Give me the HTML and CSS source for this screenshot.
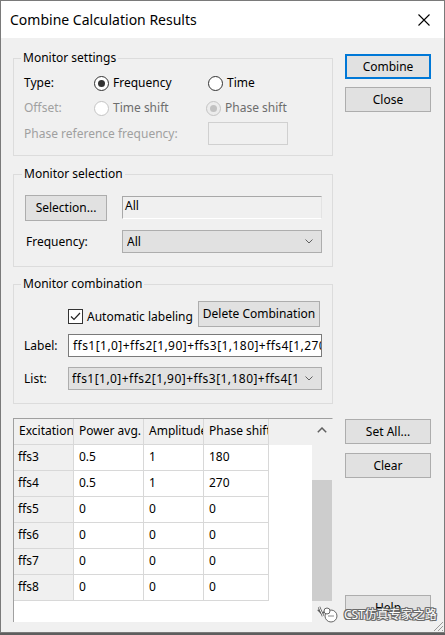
FILE: index.html
```html
<!DOCTYPE html>
<html>
<head>
<meta charset="utf-8">
<link rel="stylesheet" href="styles.css">
</head>
<body>
<div class="window">
  <div class="titlebar">
    <span class="title">Combine Calculation Results</span>
    <svg class="close" width="12" height="12" viewBox="0 0 12 12"><path d="M0.5 0.5L11.5 11.5M11.5 0.5L0.5 11.5" stroke="#000" stroke-width="1.1" fill="none"/></svg>
  </div>
  <div class="client">
    <div class="groups">
      <fieldset class="group g1">
        <legend>Monitor settings</legend>
        <div class="row r1">
          <span class="lbl">Type:</span>
          <label class="radio"><span class="rb on"></span>Frequency</label>
          <label class="radio c3"><span class="rb"></span>Time</label>
        </div>
        <div class="row r2">
          <span class="lbl dis">Offset:</span>
          <label class="radio dis2"><span class="rb off"></span>Time shift</label>
          <label class="radio dis2 c3b"><span class="rb off on"></span>Phase shift</label>
        </div>
        <div class="row r3">
          <span class="lbl dis span2">Phase reference frequency:</span>
          <span class="edit-dis"></span>
        </div>
      </fieldset>

      <fieldset class="group g2">
        <legend>Monitor selection</legend>
        <div class="row s1">
          <button class="btn sel">Selection...</button>
          <div class="static-edit">All</div>
        </div>
        <div class="row s2">
          <span class="lbl flbl">Frequency:</span>
          <div class="combo"><span class="ctext">All</span><svg class="chev" width="8" height="5" viewBox="0 0 8 5"><path d="M0.5 0.5L4 4L7.5 0.5" stroke="#606060" fill="none"/></svg></div>
        </div>
      </fieldset>

      <fieldset class="group g3">
        <legend>Monitor combination</legend>
        <div class="row m1">
          <label class="check"><span class="cb"><svg width="13" height="13" viewBox="0 0 13 13"><path d="M2 6.5L5 9.5L11 3" stroke="#222" stroke-width="1.2" fill="none"/></svg></span>Automatic labeling</label>
          <button class="btn del">Delete Combination</button>
        </div>
        <div class="row m2">
          <span class="lbl llbl">Label:</span>
          <div class="edit"><span class="etext">ffs1[1,0]+ffs2[1,90]+ffs3[1,180]+ffs4[1,270]</span></div>
        </div>
        <div class="row m3">
          <span class="lbl llbl">List:</span>
          <div class="combo wide"><span class="ctext">ffs1[1,0]+ffs2[1,90]+ffs3[1,180]+ffs4[1,270]</span><svg class="chev" width="8" height="5" viewBox="0 0 8 5"><path d="M0.5 0.5L4 4L7.5 0.5" stroke="#606060" fill="none"/></svg></div>
        </div>
      </fieldset>
    </div>

    <div class="btncol topbtns">
      <button class="btn default">Combine</button>
      <button class="btn">Close</button>
    </div>

    <div class="tablebox">
      <div class="grid">
        <div class="cell hd">Excitation</div><div class="cell hd">Power avg.</div><div class="cell hd">Amplitude</div><div class="cell hd">Phase shift</div><div class="cell hx"></div>
        <div class="cell rh">ffs3</div><div class="cell">0.5</div><div class="cell">1</div><div class="cell">180</div><div class="cell ex"></div>
        <div class="cell rh">ffs4</div><div class="cell">0.5</div><div class="cell">1</div><div class="cell">270</div><div class="cell ex"></div>
        <div class="cell rh">ffs5</div><div class="cell">0</div><div class="cell">0</div><div class="cell">0</div><div class="cell ex"></div>
        <div class="cell rh">ffs6</div><div class="cell">0</div><div class="cell">0</div><div class="cell">0</div><div class="cell ex"></div>
        <div class="cell rh">ffs7</div><div class="cell">0</div><div class="cell">0</div><div class="cell">0</div><div class="cell ex"></div>
        <div class="cell rh">ffs8</div><div class="cell">0</div><div class="cell">0</div><div class="cell">0</div><div class="cell ex"></div>
      </div>
      <div class="vscroll">
        <div class="arrow"><svg width="10" height="6" viewBox="0 0 10 6"><path d="M0.8 5.2L5 1L9.2 5.2" stroke="#606060" stroke-width="1.5" fill="none"/></svg></div>
        <div class="track"><div class="thumb"></div></div>
        <div class="arrow"><svg width="10" height="6" viewBox="0 0 10 6"><path d="M0.8 0.8L5 5L9.2 0.8" stroke="#606060" stroke-width="1.5" fill="none"/></svg></div>
      </div>
    </div>

    <div class="btncol botbtns">
      <button class="btn">Set All...</button>
      <button class="btn">Clear</button>
      <button class="btn help">Help</button>
    </div>
  </div>

  <div class="watermark">
    <svg class="wm-icon" width="24" height="20" viewBox="0 0 24 20"><path d="M3 3L7 12" stroke="#555" stroke-width="2.4" fill="none"/><path d="M3 3L7 12" stroke="#fff" stroke-width="1" fill="none"/><circle cx="15" cy="12" r="6" fill="#fff" stroke="#666" stroke-width="1"/><circle cx="11" cy="7" r="3" fill="#fff" stroke="#666" stroke-width="1"/><path d="M12 12h6" stroke="#888" stroke-width="1"/></svg>
    <span class="wm-text">CST仿真专家之路</span>
  </div>
  <svg class="grip" width="12" height="12" viewBox="0 0 12 12"><path d="M11 2L2 11M11 6L6 11M11 10L10 11" stroke="#9a9a9a" stroke-width="1" fill="none"/></svg>
</div>
</body>
</html>
```
FILE: styles.css
```css
html, body {
  margin: 0;
  padding: 0;
  background: #5e5e5e;
}
body {
  font-family: "Noto Sans", "Noto Sans CJK SC", sans-serif;
  font-size: 12px;
  color: #000;
}
.window {
  position: relative;
  width: 445px;
  height: 633px;
  box-sizing: border-box;
  border: 1px solid #7a7a7a;
  background: #f0f0f0;
  display: flex;
  flex-direction: column;
  overflow: hidden;
}
.titlebar {
  height: 37px;
  flex: none;
  background: #fff;
  display: flex;
  align-items: center;
  justify-content: space-between;
  padding: 0 14px 0 9px;
}
.title {
  font-size: 14px;
  line-height: 18px;
  margin-top: 1px;
}
.close { display: block; margin-top: 1px; }

.client {
  flex: 1;
  display: grid;
  grid-template-columns: 320px 86px;
  grid-template-rows: auto 1fr;
  column-gap: 12px;
  padding: 12px 13px 10px 12px;
}

.group {
  margin: 0;
  border: 1px solid #dcdcdc;
  min-width: 0;
  padding: 0 10px 0 10px;
}
.group legend {
  padding: 0 2px;
  margin-left: -3px;
  line-height: 16px;
  height: 16px;
}
.g1 { padding-top: 5px; padding-bottom: 9px; }
.g2 { margin-top: 10px; padding-top: 13px; padding-bottom: 13px; padding-left: 11px; }
.g3 { margin-top: 9px; padding-top: 9px; padding-bottom: 13px; }

.row { display: flex; align-items: center; }
.g1 .row {
  display: grid;
  grid-template-columns: 70px 113px 1fr;
  align-items: center;
}
.r1 { height: 24px; }
.r2 { height: 26px; }
.r3 { height: 25px; }
.span2 { grid-column: 1 / 3; }
.lbl { line-height: 16px; white-space: nowrap; }
.dis { color: #a0a0a0; }
.dis2 { color: #6d6d6d; }

.radio {
  display: flex;
  align-items: center;
  line-height: 16px;
}
.c3 { margin-left: 1px; }
.c3b { margin-left: -1px; }
.rb {
  width: 15px;
  height: 15px;
  box-sizing: border-box;
  border-radius: 50%;
  border: 1px solid #333;
  background: #fff;
  display: flex;
  align-items: center;
  justify-content: center;
  margin-right: 4px;
  flex: none;
}
.rb.on::after {
  content: "";
  width: 7px;
  height: 7px;
  border-radius: 50%;
  background: #333;
}
.rb.off { border-color: #c4c4c4; background: #fff; }
.rb.off.on { background: #ececec; }
.rb.off.on::after { background: #c2c2c2; }

.edit-dis {
  width: 80px;
  height: 23px;
  box-sizing: border-box;
  border: 1px solid #d0d0d0;
  background: #f0f0f0;
  margin-left: 1px;
}

.btn {
  font-family: inherit;
  font-size: 12px;
  color: #000;
  background: #e1e1e1;
  border: 1px solid #adadad;
  height: 25px;
  box-sizing: border-box;
  padding: 0;
  margin: 0;
  line-height: 16px;
  text-align: center;
}
.btn.default { border: 2px solid #0078d7; }

.s1 { height: 26px; align-items: flex-start; }
.sel { width: 82px; height: 26px; }
.static-edit {
  margin-left: 15px;
  margin-top: 1px;
  width: 200px;
  height: 23px;
  box-sizing: border-box;
  border: 1px solid #a8a8a8;
  border-right-color: #e3e3e3;
  border-bottom-color: #fff;
  padding: 1px 2px 0 2px;
  line-height: 16px;
}
.s2 { margin-top: 9px; height: 23px; }
.flbl { width: 96px; margin-left: 1px; }

.combo {
  width: 200px;
  height: 23px;
  box-sizing: border-box;
  background: #e1e1e1;
  border: 1px solid #adadad;
  display: flex;
  align-items: center;
  padding-left: 4px;
  padding-right: 8px;
}
.combo.wide { width: 254px; padding-left: 3px; }
.ctext {
  flex: 1;
  overflow: hidden;
  white-space: nowrap;
  line-height: 16px;
}
.combo.wide .ctext { letter-spacing: 0.45px; }
.chev { flex: none; margin-left: 8px; display: block; }

.m1 { height: 26px; align-items: flex-start; }
.check {
  display: flex;
  align-items: center;
  margin-left: 44px;
  margin-top: 8px;
  line-height: 16px;
  height: 15px;
}
.cb {
  width: 15px;
  height: 15px;
  box-sizing: border-box;
  border: 1px solid #333;
  background: #fff;
  display: flex;
  align-items: center;
  justify-content: center;
  margin-right: 4px;
}
.cb svg { display: block; }
.del { margin-left: auto; margin-right: 2px; width: 122px; height: 26px; }
.m2 { margin-top: 7px; height: 23px; }
.m3 { margin-top: 10px; height: 23px; }
.llbl { width: 44px; }
.edit {
  width: 254px;
  height: 23px;
  box-sizing: border-box;
  background: #fff;
  border: 1px solid #7a7a7a;
  padding-left: 4px;
  display: flex;
  align-items: center;
  overflow: hidden;
}
.etext { white-space: nowrap; line-height: 16px; letter-spacing: 0.45px; }

.btncol { display: flex; flex-direction: column; }
.topbtns { margin-top: 4px; gap: 8px; }
.botbtns { margin-top: 15px; gap: 9px; }
.help { margin-top: auto; margin-bottom: 2px; }

.tablebox {
  margin-top: 14px;
  height: 204px;
  box-sizing: border-box;
  border-top: 1px solid #a0a0a0;
  border-left: 1px solid #a0a0a0;
  border-right: 1px solid #f0f0f0;
  background: #fff;
  display: flex;
}
.grid {
  flex: 1;
  display: grid;
  grid-template-columns: 60px 70px 60px 65px 1fr;
  grid-auto-rows: 26px;
  align-content: start;
}
.cell {
  box-sizing: border-box;
  border-right: 1px solid #d8d8d8;
  border-bottom: 1px solid #d8d8d8;
  padding: 4px 0 0 5px;
  line-height: 16px;
  white-space: nowrap;
  overflow: hidden;
  background: #fff;
}
.cell.hd { background: #f0f0f0; }
.cell.rh { background: #f0f0f0; padding-left: 4px; }
.cell.hx { background: #f0f0f0; border: none; }
.cell.ex { border: none; }

.vscroll {
  width: 20px;
  flex: none;
  background: #f0f0f0;
  display: flex;
  flex-direction: column;
}
.arrow {
  height: 21px;
  display: flex;
  align-items: center;
  justify-content: center;
}
.arrow svg { display: block; }
.track { flex: 1; display: flex; flex-direction: column; }
.thumb { margin-top: 40px; flex: 1; background: #cdcdcd; }

.watermark {
  position: absolute;
  left: 315px;
  top: 601px;
  display: flex;
  align-items: center;
  gap: 4px;
}
.wm-icon { display: block; margin-top: 2px; }
.wm-text {
  font-size: 12px;
  line-height: 14px;
  color: #fff;
  margin-top: 4px;
  text-shadow: 1px 0 0 #6a6a6a, -1px 0 0 #6a6a6a, 0 1px 0 #6a6a6a, 0 -1px 0 #6a6a6a, 1px 1px 0 #6a6a6a, -1px -1px 0 #6a6a6a, 1px -1px 0 #6a6a6a, -1px 1px 0 #6a6a6a;
}
.grip {
  position: absolute;
  right: 0;
  bottom: 0;
}
```
